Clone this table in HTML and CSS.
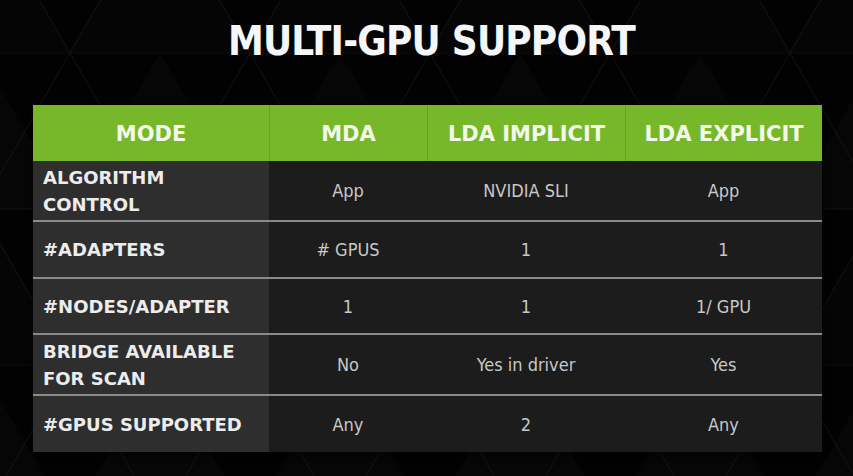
FILE: index.html
```html
<!DOCTYPE html>
<html>
<head>
<meta charset="utf-8">
<link rel="stylesheet" href="styles.css">
</head>
<body>
<div class="slide">
  <svg class="bg" width="853" height="476" viewBox="0 0 853 476" aria-hidden="true">
    <defs>
      <pattern id="tri" x="70" y="53" width="180" height="312" patternUnits="userSpaceOnUse">
        <path d="M0 156 L90 0 L180 156 Z" fill="#060606"/>
        <path d="M90 156 L180 312 L0 312 Z" fill="#050505"/>
        <path d="M0 0 H180 M0 156 H180 M0 0 L180 312 M180 0 L0 312" stroke="#121212" stroke-width="1" fill="none"/>
      </pattern>
    </defs>
    <rect width="853" height="476" fill="url(#tri)"/>
  </svg>
  <h1 class="title">MULTI-GPU SUPPORT</h1>
  <div class="table">
    <div class="row head">
      <div class="cell">MODE</div>
      <div class="cell">MDA</div>
      <div class="cell">LDA IMPLICIT</div>
      <div class="cell">LDA EXPLICIT</div>
    </div>
    <div class="row tall">
      <div class="cell label">ALGORITHM<br>CONTROL</div>
      <div class="cell val">App</div>
      <div class="cell val">NVIDIA SLI</div>
      <div class="cell val">App</div>
    </div>
    <div class="row">
      <div class="cell label">#ADAPTERS</div>
      <div class="cell val"># GPUS</div>
      <div class="cell val">1</div>
      <div class="cell val">1</div>
    </div>
    <div class="row short">
      <div class="cell label">#NODES/ADAPTER</div>
      <div class="cell val">1</div>
      <div class="cell val">1</div>
      <div class="cell val">1/ GPU</div>
    </div>
    <div class="row tall">
      <div class="cell label">BRIDGE AVAILABLE<br>FOR SCAN</div>
      <div class="cell val">No</div>
      <div class="cell val">Yes in driver</div>
      <div class="cell val">Yes</div>
    </div>
    <div class="row last">
      <div class="cell label">#GPUS SUPPORTED</div>
      <div class="cell val">Any</div>
      <div class="cell val">2</div>
      <div class="cell val">Any</div>
    </div>
  </div>
</div>
</body>
</html>
```

FILE: styles.css
```css
html, body {
  margin: 0;
  padding: 0;
  background: #000;
}
.slide {
  position: relative;
  width: 853px;
  height: 476px;
  overflow: hidden;
  background: #020202;
}
.bg {
  position: absolute;
  left: 0;
  top: 0;
  z-index: 0;
}
.title {
  position: relative;
  z-index: 1;
  margin: 0;
  box-sizing: border-box;
  height: 105px;
  padding-top: 21px;
  padding-left: 10px;
  text-align: center;
  font-family: "DejaVu Sans Condensed", "DejaVu Sans", sans-serif;
  font-stretch: condensed;
  font-weight: bold;
  font-size: 40px;
  line-height: 40px;
  letter-spacing: -0.8px;
  color: #f4f6f8;
}
.table {
  position: relative;
  z-index: 1;
  margin-left: 33px;
  width: 789px;
  box-shadow: 2px 2px 6px rgba(0,0,0,0.6);
}
.row {
  display: grid;
  grid-template-columns: 236px 158px 198px 197px;
  height: 55px;
  border-bottom: 2px solid #8a8a8a;
}
.row.tall { height: 59px; }
.row.short { height: 54px; }
.row.last { height: 56px; border-bottom: none; }
.row.head {
  height: 56px;
  border-bottom: none;
  background: #76b82a;
}
.cell {
  display: flex;
  align-items: center;
  justify-content: center;
  background: #1c1c1c;
}
.head .cell {
  background: #76b82a;
  border-left: 1px solid #65a224;
  font-family: "DejaVu Sans", "Liberation Sans", sans-serif;
  font-weight: bold;
  font-size: 21px;
  color: #f3f8ea;
  padding-top: 2px;
}
.head .cell:first-child { border-left: none; }
.cell.label {
  justify-content: flex-start;
  padding-left: 10px;
  background: #2e2e2e;
  font-family: "DejaVu Sans", "Liberation Sans", sans-serif;
  font-weight: bold;
  font-size: 18px;
  line-height: 27px;
  color: #ececec;
}
.cell.val {
  font-family: "DejaVu Sans Condensed", "DejaVu Sans", sans-serif;
  font-stretch: condensed;
  font-weight: 200;
  font-size: 18px;
  color: #c8c8c8;
}
```
